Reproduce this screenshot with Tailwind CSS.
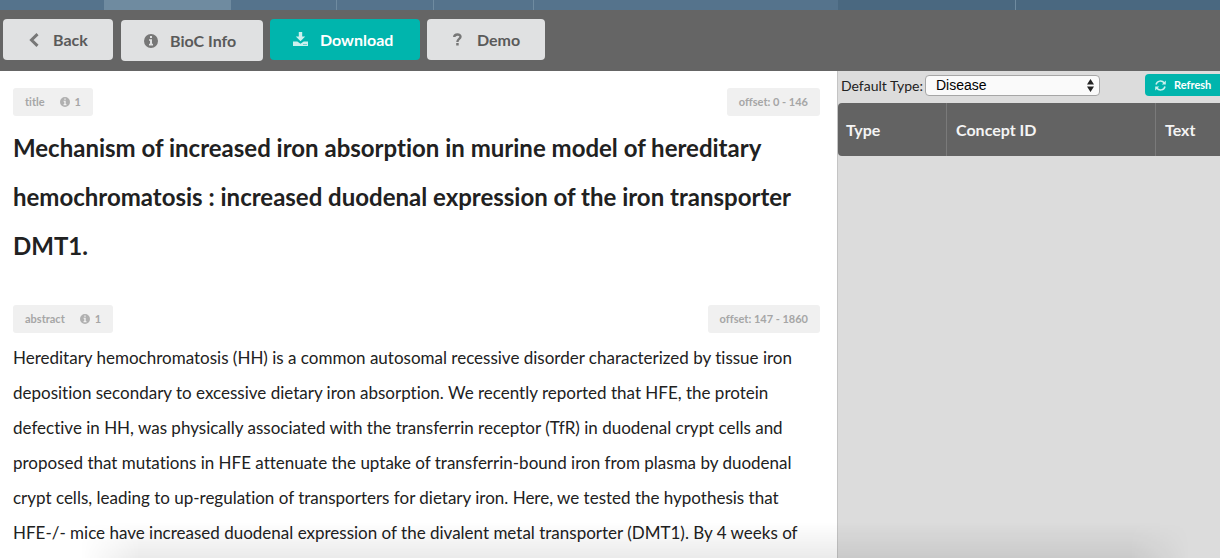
<!DOCTYPE html>
<html lang="en">
<head>
<meta charset="utf-8">
<title>BioC document</title>
<script src="https://cdn.jsdelivr.net/npm/@tailwindcss/browser@4"></script>
</head>
<body class="relative flex h-screen flex-col overflow-hidden bg-white font-['Lato',sans-serif] text-[#212121] [font-variant-ligatures:none]">
<svg class="hidden">
  <symbol id="info" viewBox="0 0 14 14"><path fill="currentColor" fill-rule="evenodd" d="M7 0a7 7 0 1 0 0 14A7 7 0 0 0 7 0ZM6 2h2v2H6ZM5 5.2h3v4.6h1v1.7H5V9.800h1V6.800H5Z"/></symbol>
</svg>
<nav class="flex h-[10px] shrink-0 bg-[#55738c]">
  <div class="w-[104px]"></div>
  <div class="w-[127px] bg-[#6f8ba0]"></div>
  <div class="w-[106px] border-r border-[#6f8ba0]"></div>
  <div class="w-[97px] border-r border-[#6f8ba0]"></div>
  <div class="w-[100px] border-r border-[#6f8ba0]"></div>
  <div class="flex-1"></div>
  <div class="w-[178px] border-r border-[#6f8ba0] bg-[#4a6880]"></div>
  <div class="w-[204px] bg-[#4a6880]"></div>
</nav>
<header class="flex h-[61px] shrink-0 items-start bg-[#656565] pt-[9px] pl-[3px] text-[16px] font-bold text-[#5a5a5a]">
  <button class="flex h-[41px] w-[110px] items-center rounded-[4px] bg-[#e0e1e2] pl-[26px]">
    <svg class="mr-[14px] h-[14px] w-[10px]" viewBox="0 0 10 14"><path d="M8.500 1.200 2.500 7l6 5.800" fill="none" stroke="#777" stroke-width="3"/></svg>Back
  </button>
  <button class="mt-px ml-2 flex h-[41px] w-[142px] items-center rounded-[4px] bg-[#e0e1e2] pl-[23px]">
    <svg class="mr-[12px] size-[14px] text-[#777]"><use href="#info"/></svg>BioC Info
  </button>
  <button class="ml-[7px] flex h-[41px] w-[150px] items-center rounded-[4px] bg-[#00b5ad] pl-[23px] text-white">
    <svg class="mr-[12px] size-[15px]" viewBox="0 0 15 15"><path fill="#ccf0ee" fill-rule="evenodd" d="M5.800 0h3.400v4.500h3L7.500 9.300 2.800 4.500h3ZM0 9.500h4.300l3.200 2.200 3.200-2.200H15V14H0ZM10.500 12v1h1v-1ZM12.500 12v1h1v-1Z"/></svg>Download
  </button>
  <button class="ml-[7px] flex h-[41px] w-[118px] items-center rounded-[4px] bg-[#e0e1e2] pl-[26px]">
    <svg class="mr-[15px] h-[13px] w-[9px]" viewBox="0 0 9 13"><path d="M1.200 4C1.500 1 7.500.500 7.500 3.700 7.500 6 4.400 5.800 4.400 9" fill="none" stroke="#777" stroke-width="2.400"/><path fill="#777" d="M3.200 10h2.500v2.500H3.200Z"/></svg>Demo
  </button>
</header>
<main class="flex min-h-0 flex-1">
  <article class="min-w-0 flex-1 overflow-hidden pt-[17px] pr-[17px] pl-[13px]">
    <section>
      <div class="flex items-start justify-between text-[11px] leading-[28px] font-bold text-[#a6a6a6]">
        <span class="flex items-center rounded-[3px] bg-[#f0f0f0] px-[12px]">title<svg class="mr-[5px] ml-[15px] size-[10px] text-[#b0b0b0]"><use href="#info"/></svg>1</span>
        <span class="rounded-[3px] bg-[#f0f0f0] px-[12px]">offset: 0 - 146</span>
      </div>
      <h1 class="mt-[7px] text-[24px] leading-[49px] font-bold">Mechanism of increased iron absorption in murine model of hereditary hemochromatosis : increased duodenal expression of the iron transporter DMT1.</h1>
    </section>
    <section class="mt-[35px]">
      <div class="flex items-start justify-between text-[11px] leading-[28px] font-bold text-[#a6a6a6]">
        <span class="flex items-center rounded-[3px] bg-[#f0f0f0] px-[12px]">abstract<svg class="mr-[5px] ml-[15px] size-[10px] text-[#b0b0b0]"><use href="#info"/></svg>1</span>
        <span class="rounded-[3px] bg-[#f0f0f0] px-[12px]">offset: 147 - 1860</span>
      </div>
      <p class="mt-[7px] text-[17px] leading-[35px]">Hereditary hemochromatosis (HH) is a common autosomal recessive disorder characterized by tissue iron deposition secondary to excessive dietary iron absorption. We recently reported that HFE, the protein defective in HH, was physically associated with the transferrin receptor (TfR) in duodenal crypt cells and proposed that mutations in HFE attenuate the uptake of transferrin-bound iron from plasma by duodenal crypt cells, leading to up-regulation of transporters for dietary iron. Here, we tested the hypothesis that HFE-/- mice have increased duodenal expression of the divalent metal transporter (DMT1). By 4 weeks of</p>
    </section>
  </article>
  <aside class="w-[383px] shrink-0 overflow-hidden border-l border-[#c4c4c4] bg-[#dcdcdc]">
    <div class="flex h-[32px] items-center pb-[4px] pl-[3px]">
      <label for="type" class="text-[14px]">Default Type:</label>
      <div class="relative ml-[2px]">
        <select id="type" class="block h-[21px] w-[175px] appearance-none rounded-[4px] border border-[#a6a6a6] bg-[#fafafa] pl-[10px] font-['Liberation_Sans',sans-serif] text-[14px] leading-[19px] text-black"><option>Disease</option></select>
        <svg class="pointer-events-none absolute top-[4px] right-[6px] h-[13px] w-[7px]" viewBox="0 0 7 13"><path fill="#222" d="M3.500 0 7 5.500H0ZM0 7.500h7L3.500 13Z"/></svg>
      </div>
      <button class="ml-auto flex h-[22px] w-[75px] items-center rounded-l-[4px] bg-[#00b5ad] pl-[10px] text-[11px] font-bold text-white">
        <svg class="mr-[8px] size-[11px]" viewBox="0 0 11 11"><g fill="none" stroke="#ccf0ee" stroke-width="1.500"><path d="M1 4.500C2 .500 7 0 9.300 3M10 6.500C9 10.500 4 11 1.700 8"/></g><path fill="#ccf0ee" d="M10.800.500v4h-4ZM.200 10.500v-4h4Z"/></svg>Refresh
      </button>
    </div>
    <table class="w-full table-fixed border-separate border-spacing-0 text-left text-[16px] text-[#f4f4f4]">
      <thead><tr class="h-[53px]">
        <th class="w-[109px] rounded-l-[4px] border-r border-[#7a7a7a] bg-[#636363] pl-[8px]">Type</th>
        <th class="w-[209px] border-r border-[#7a7a7a] bg-[#636363] pl-[9px]">Concept ID</th>
        <th class="bg-[#636363] pl-[9px]">Text</th>
      </tr></thead>
    </table>
  </aside>
</main>
<div class="pointer-events-none absolute right-[30px] bottom-0 left-[80px] h-[36px] bg-linear-to-t from-black/8 to-transparent [mask-image:linear-gradient(to_right,transparent,black_60px,black_calc(100%-60px),transparent)]"></div>
</body>
</html>
